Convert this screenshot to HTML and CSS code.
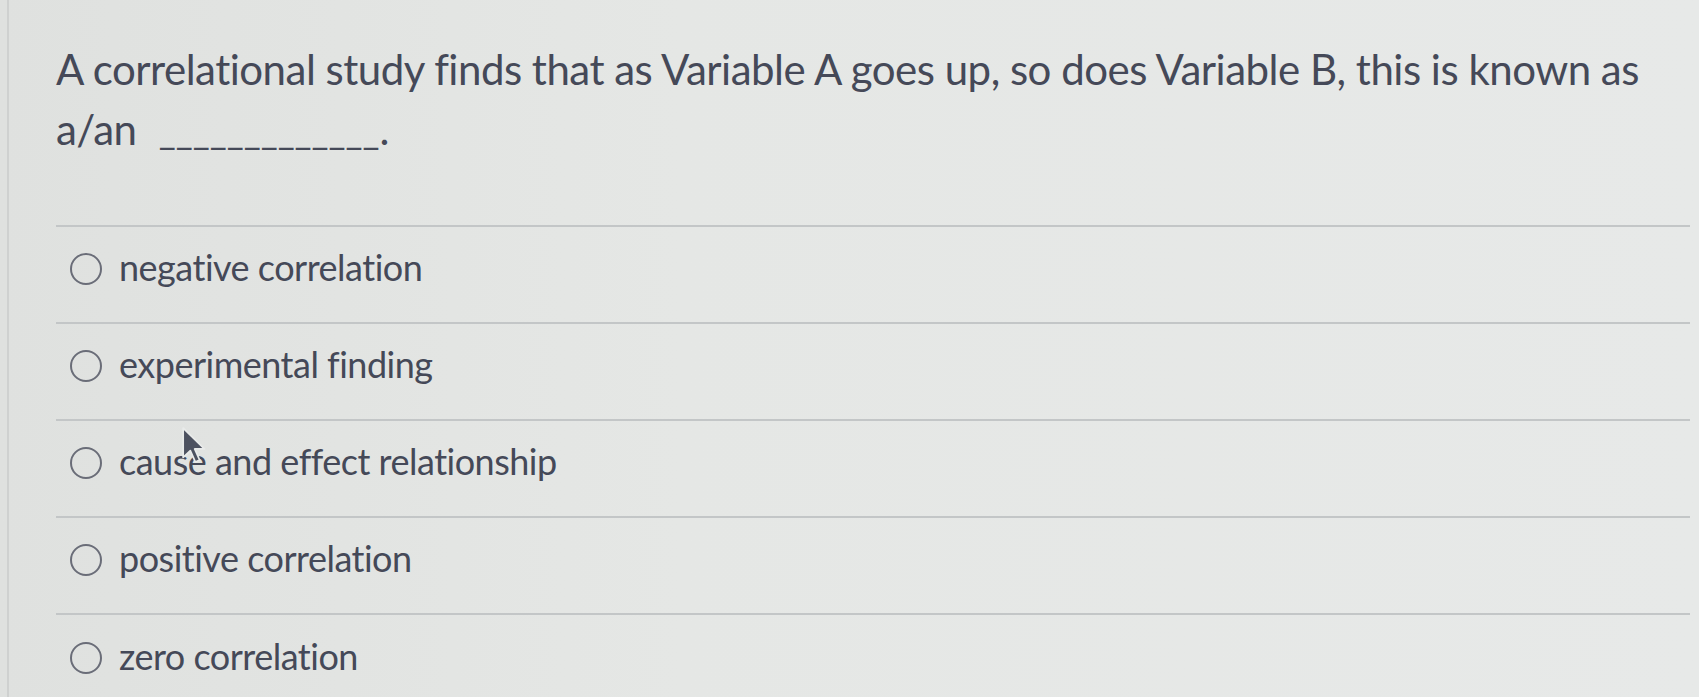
FILE: index.html
```html
<!DOCTYPE html>
<html lang="en">
<head>
<meta charset="utf-8">
<title>Quiz question</title>
<link rel="stylesheet" href="styles.css">
</head>
<body>
<div class="screen">
  <div class="panel">
    <div class="question">A correlational study finds that as Variable A goes up, so does Variable B, this is known as a/an <span class="blank">_____________</span>.</div>
    <ul class="answers">
      <li class="answer"><span class="radio"></span><span class="label">negative correlation</span></li>
      <li class="answer"><span class="radio"></span><span class="label">experimental finding</span></li>
      <li class="answer"><span class="radio"></span><span class="label">cause and effect relationship</span></li>
      <li class="answer"><span class="radio"></span><span class="label">positive correlation</span></li>
      <li class="answer"><span class="radio"></span><span class="label">zero correlation</span></li>
    </ul>
  </div>
  <svg class="cursor" width="26" height="39" viewBox="0 0 12 18" aria-hidden="true">
    <path d="M1 1 L1 14.5 L4.3 11.4 L6.6 16.6 L8.6 15.7 L6.3 10.6 L10.8 10.6 Z" fill="#4d5260" stroke="#e9ebea" stroke-width="0.8" stroke-linejoin="round"/>
  </svg>
</div>
</body>
</html>
```
FILE: styles.css
```css
html, body {
  margin: 0;
  padding: 0;
  background: #e3e5e3;
}
.screen {
  position: relative;
  width: 1699px;
  height: 697px;
  overflow: hidden;
  background: linear-gradient(90deg, #dfe1df 0%, #e5e7e5 40%, #e7e9e8 100%);
}
.panel {
  margin-left: 7px;
  height: 697px;
  border-left: 2px solid #cfd1d0;
  padding: 39px 9px 0 47px;
  font-family: Lato, "Open Sans", sans-serif;
  color: #454958;
}
.question {
  font-size: 42px;
  line-height: 60px;
  letter-spacing: -0.5px;
  padding-bottom: 64px;
}
.blank {
  font-size: 37px;
  letter-spacing: 0;
  margin-left: 12px;
}
.answers {
  list-style: none;
  margin: 0;
  padding: 0;
  border-top: 2px solid #c3c6c7;
}
.answer {
  box-sizing: border-box;
  display: flex;
  align-items: center;
  height: 97px;
  border-bottom: 2px solid #c3c6c7;
  padding: 0 0 12px 14px;
}
.answer:last-child {
  border-bottom: none;
}
.radio {
  width: 28px;
  height: 28px;
  border: 2px solid #6a6d78;
  border-radius: 50%;
  flex: none;
  margin-right: 17px;
}
.label {
  font-size: 36px;
  line-height: 44px;
  letter-spacing: -0.5px;
  padding-bottom: 4px;
}
.cursor {
  position: absolute;
  left: 181px;
  top: 426px;
}
```
